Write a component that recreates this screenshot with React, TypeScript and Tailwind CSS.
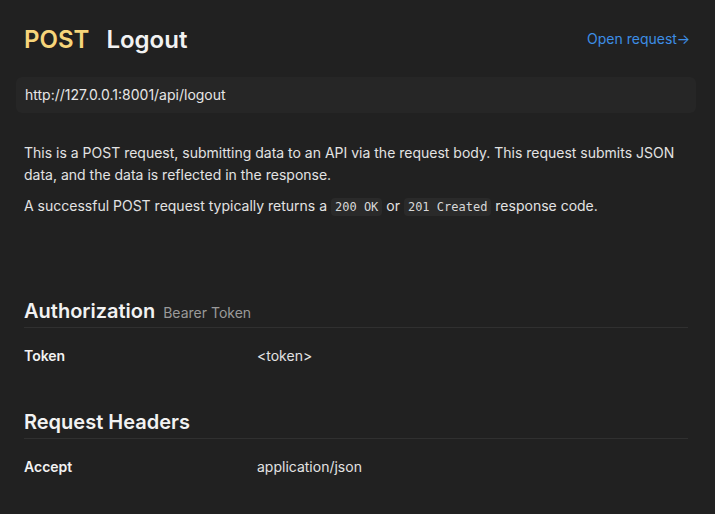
import React from "react";

const mono = { fontFamily: "'DejaVu Sans Mono', 'Liberation Mono', monospace" };

export default function App() {
  return (
    <div className="min-h-[514px] w-full bg-[#212121] pl-6 pr-[27px] pt-6 text-[#e6e6e6]" style={{ fontFamily: "Inter, 'Noto Sans', sans-serif" }}>
      <div className="flex h-8 items-center justify-between">
        <div className="flex items-center gap-[17px] text-[24px] font-semibold leading-8">
          <span className="text-[#f7d57a]">POST</span>
          <span className="text-[#f2f2f2]">Logout</span>
        </div>
        <a className="-mr-[2px] pb-1 text-[14px] text-[#3d8ee6]">Open request→</a>
      </div>
      <div className="-mx-2 mt-[21px] flex h-9 items-center rounded-md bg-[#262626] px-[9px] pb-[2px] text-[14px] text-[#e6e6e6]">
        http://127.0.0.1:8001/api/logout
      </div>
      <div className="mt-[29px] text-[14px] leading-[22px] text-[#e3e3e3]">
        <p>
          This is a POST request, submitting data to an API via the request body. This request submits JSON data, and the
          data is reflected in the response.
        </p>
        <p className="mt-[9px]">
          A successful POST request typically returns a{" "}
          <code className="rounded bg-[#2a2a2a] px-1 py-[2px] text-[12px] text-[#d8d8d8]" style={mono}>200 OK</code> or{" "}
          <code className="rounded bg-[#2a2a2a] px-1 py-[2px] text-[12px] text-[#d8d8d8]" style={mono}>201 Created</code>{" "}
          response code.
        </p>
      </div>
      <div className="mt-[79px]">
        <div className="flex items-baseline gap-2 border-b border-[#303030] pb-[2px]">
          <h2 className="text-[20px] font-semibold leading-7 text-[#f2f2f2]">Authorization</h2>
          <span className="text-[14px] text-[#9a9a9a]">Bearer Token</span>
        </div>
        <div className="flex pb-[18px] pt-[18px] text-[14px] leading-5">
          <div className="w-[233px] font-semibold text-[#f2f2f2]">Token</div>
          <div className="text-[#e3e3e3]">&lt;token&gt;</div>
        </div>
      </div>
      <div className="mt-6">
        <div className="border-b border-[#303030] pb-[2px]">
          <h2 className="text-[20px] font-semibold leading-7 text-[#f2f2f2]">Request Headers</h2>
        </div>
        <div className="flex pb-[18px] pt-[18px] text-[14px] leading-5">
          <div className="w-[233px] font-semibold text-[#f2f2f2]">Accept</div>
          <div className="text-[#e3e3e3]">application/json</div>
        </div>
      </div>
    </div>
  );
}
